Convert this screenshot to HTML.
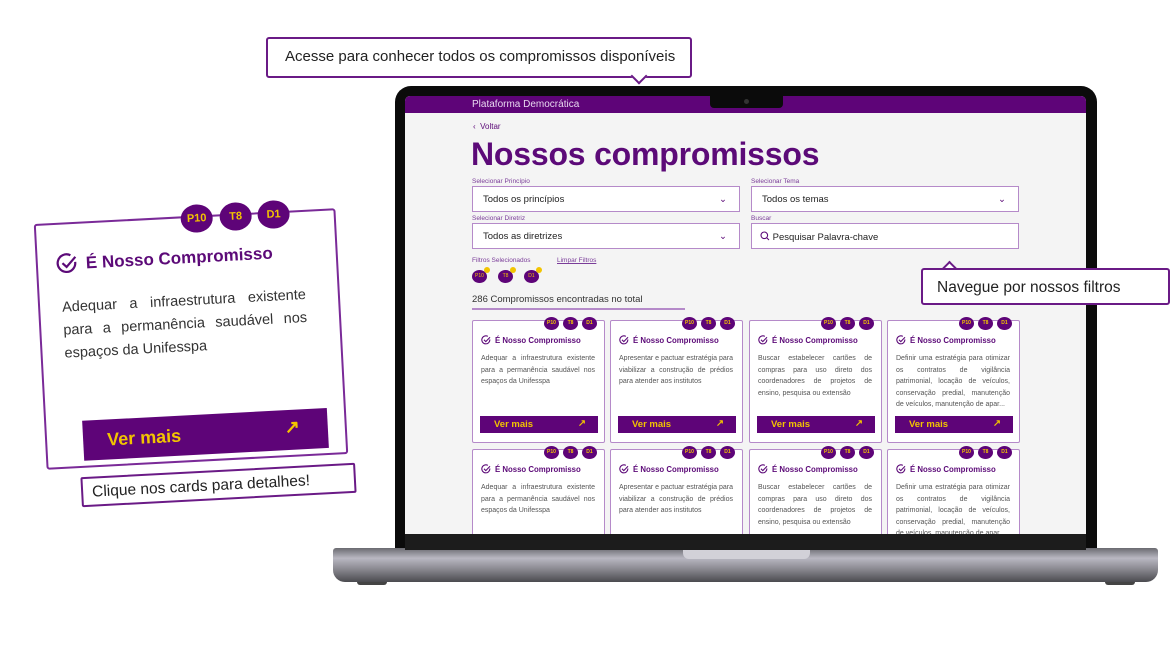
<!DOCTYPE html>
<html><head><meta charset="utf-8"><style>
*{box-sizing:border-box;margin:0;padding:0}
body{width:1171px;height:670px;background:#fff;position:relative;overflow:hidden;font-family:"Liberation Sans",sans-serif;color:#222}
.abs{position:absolute}
.p{color:#5c0a78}
.frame{left:395px;top:86px;width:702px;height:470px;background:#0b0b0b;border-radius:16px 16px 0 0}
.screen{left:405px;top:96px;width:681px;height:438px;background:#f4f4f4;overflow:hidden;border-radius:5px 5px 0 0}
.bar{left:0;top:0;width:681px;height:17px;background:#5e0478;color:#e8d8f0;font-size:10px;padding:3px 0 0 67px}
.notch{left:305px;top:0;width:73px;height:12px;background:#0b0b0b;border-radius:0 0 4px 4px}
.sel{background:#fff;border:1.5px solid #b58ac9;height:26px;font-size:9.5px;padding:7px 0 0 10px;color:#222}
.lbl{font-size:6.5px;color:#7a3c99}
.card{width:133px;height:123px;background:#fff;border:1.5px solid #b58ac9;border-radius:2px}
.ct{position:absolute;left:8px;top:14px;font-size:7.8px;font-weight:bold;color:#5c0a78;white-space:nowrap}
.ct svg{vertical-align:-2px;margin-right:4px}
.cx{position:absolute;left:8px;top:32px;width:114px;font-size:7px;line-height:11.5px;color:#555;text-align:justify}
.btn{position:absolute;left:7px;top:95px;width:118px;height:17px;background:#5e0478;color:#f2c400;font-size:9.5px;font-weight:bold;padding:3px 0 0 14px}
.btn span{position:absolute;right:12px;top:2px}
.bd{position:absolute;top:-4px;width:15px;height:13px;border-radius:50%;background:#5e0478;color:#f2c400;font-size:5px;font-weight:bold;text-align:center;line-height:13px}
.tip{background:#fff;border:2px solid #6a1a86;border-radius:3px;color:#222}
</style></head><body>

<div class="abs tip" style="left:266px;top:37px;width:426px;height:41px;padding:9px 0 0 17px;font-size:15px">Acesse para conhecer todos os compromissos disponíveis</div>
<div class="abs" style="left:633px;top:70px;width:12px;height:12px;background:#fff;border-right:2px solid #6a1a86;border-bottom:2px solid #6a1a86;transform:rotate(45deg)"></div>

<div class="abs frame"></div>
<div class="abs" style="left:333px;top:548px;width:825px;height:34px;border-radius:3px 3px 12px 12px;background:linear-gradient(180deg,#6a6a70 0%,#b9b8c2 30%,#8d8c94 60%,#4b4b50 100%)"></div>
<div class="abs" style="left:405px;top:534px;width:681px;height:16px;background:#1c1c1c"></div>
<div class="abs" style="left:683px;top:550px;width:127px;height:9px;background:#d2d1d8;border-radius:0 0 6px 6px"></div>
<div class="abs" style="left:357px;top:582px;width:30px;height:3px;background:#444;border-radius:0 0 3px 3px"></div>
<div class="abs" style="left:1105px;top:582px;width:30px;height:3px;background:#444;border-radius:0 0 3px 3px"></div>

<div class="abs screen">
 <div class="abs bar">Plataforma Democrática</div>
 <div class="abs notch"><div style="position:absolute;left:34px;top:3px;width:5px;height:5px;border-radius:50%;background:#333"></div></div>
 <div class="abs p" style="left:68px;top:26px;font-size:8px">‹&nbsp;&nbsp;Voltar</div>
 <div class="abs p" style="left:66px;top:40px;font-size:32px;font-weight:bold;letter-spacing:-0.2px">Nossos compromissos</div>
 <div class="abs lbl" style="left:67px;top:82px">Selecionar Princípio</div>
 <div class="abs sel" style="left:67px;top:90px;width:268px">Todos os princípios<span style="position:absolute;right:12px;color:#5c0a78">⌄</span></div>
 <div class="abs lbl" style="left:346px;top:82px">Selecionar Tema</div>
 <div class="abs sel" style="left:346px;top:90px;width:268px">Todos os temas<span style="position:absolute;right:12px;color:#5c0a78">⌄</span></div>
 <div class="abs lbl" style="left:67px;top:119px">Selecionar Diretriz</div>
 <div class="abs sel" style="left:67px;top:127px;width:268px">Todos as diretrizes<span style="position:absolute;right:12px;color:#5c0a78">⌄</span></div>
 <div class="abs lbl" style="left:346px;top:119px">Buscar</div>
 <div class="abs sel" style="left:346px;top:127px;width:268px;padding-left:8px"><svg width="10" height="10" viewBox="0 0 10 10" style="vertical-align:-1px"><circle cx="4.3" cy="4.3" r="3.3" fill="none" stroke="#5c0a78" stroke-width="1.1"/><path d="M6.6 6.6L9 9" stroke="#5c0a78" stroke-width="1.1"/></svg> Pesquisar Palavra-chave</div>
 <div class="abs lbl" style="left:67px;top:161px">Filtros Selecionados</div>
 <div class="abs lbl" style="left:152px;top:161px;text-decoration:underline">Limpar Filtros</div>
 <div class="abs" style="left:67px;top:174px;width:15px;height:13px;border-radius:50%;background:#5e0478;color:#f2c400;font-size:5px;text-align:center;line-height:13px">P10</div>
 <div class="abs" style="left:79px;top:171px;width:6px;height:6px;border-radius:50%;background:#f2c400"></div>
 <div class="abs" style="left:93px;top:174px;width:15px;height:13px;border-radius:50%;background:#5e0478;color:#f2c400;font-size:5px;text-align:center;line-height:13px">T8</div>
 <div class="abs" style="left:105px;top:171px;width:6px;height:6px;border-radius:50%;background:#f2c400"></div>
 <div class="abs" style="left:119px;top:174px;width:15px;height:13px;border-radius:50%;background:#5e0478;color:#f2c400;font-size:5px;text-align:center;line-height:13px">D1</div>
 <div class="abs" style="left:131px;top:171px;width:6px;height:6px;border-radius:50%;background:#f2c400"></div>
 <div class="abs" style="left:67px;top:198px;font-size:9.5px;color:#333">286 Compromissos encontradas no total</div>
 <div class="abs" style="left:67px;top:212px;width:213px;height:2px;background:#b58ac9"></div>

 <div class="abs card" style="left:67px;top:224px"><div class="bd" style="left:71px">P10</div><div class="bd" style="left:90px">T8</div><div class="bd" style="left:109px">D1</div><div class="ct"><svg width="10" height="10" viewBox="0 0 10 10"><path d="M8.8 4.5A4 4 0 1 1 6.8 1.4" fill="none" stroke="#5c0a78" stroke-width="1.1"/><path d="M3 4.8l1.8 1.8L9 2.2" fill="none" stroke="#5c0a78" stroke-width="1.1"/></svg>É Nosso Compromisso</div><div class="cx">Adequar a infraestrutura existente para a permanência saudável nos espaços da Unifesspa</div><div class="btn">Ver mais<span>↗</span></div></div>
 <div class="abs card" style="left:205px;top:224px"><div class="bd" style="left:71px">P10</div><div class="bd" style="left:90px">T8</div><div class="bd" style="left:109px">D1</div><div class="ct"><svg width="10" height="10" viewBox="0 0 10 10"><path d="M8.8 4.5A4 4 0 1 1 6.8 1.4" fill="none" stroke="#5c0a78" stroke-width="1.1"/><path d="M3 4.8l1.8 1.8L9 2.2" fill="none" stroke="#5c0a78" stroke-width="1.1"/></svg>É Nosso Compromisso</div><div class="cx">Apresentar e pactuar estratégia para viabilizar a construção de prédios para atender aos institutos</div><div class="btn">Ver mais<span>↗</span></div></div>
 <div class="abs card" style="left:344px;top:224px"><div class="bd" style="left:71px">P10</div><div class="bd" style="left:90px">T8</div><div class="bd" style="left:109px">D1</div><div class="ct"><svg width="10" height="10" viewBox="0 0 10 10"><path d="M8.8 4.5A4 4 0 1 1 6.8 1.4" fill="none" stroke="#5c0a78" stroke-width="1.1"/><path d="M3 4.8l1.8 1.8L9 2.2" fill="none" stroke="#5c0a78" stroke-width="1.1"/></svg>É Nosso Compromisso</div><div class="cx">Buscar estabelecer cartões de compras para uso direto dos coordenadores de projetos de ensino, pesquisa ou extensão</div><div class="btn">Ver mais<span>↗</span></div></div>
 <div class="abs card" style="left:482px;top:224px"><div class="bd" style="left:71px">P10</div><div class="bd" style="left:90px">T8</div><div class="bd" style="left:109px">D1</div><div class="ct"><svg width="10" height="10" viewBox="0 0 10 10"><path d="M8.8 4.5A4 4 0 1 1 6.8 1.4" fill="none" stroke="#5c0a78" stroke-width="1.1"/><path d="M3 4.8l1.8 1.8L9 2.2" fill="none" stroke="#5c0a78" stroke-width="1.1"/></svg>É Nosso Compromisso</div><div class="cx">Definir uma estratégia para otimizar os contratos de vigilância patrimonial, locação de veículos, conservação predial, manutenção de veículos, manutenção de apar...</div><div class="btn">Ver mais<span>↗</span></div></div>
 <div class="abs card" style="left:67px;top:353px"><div class="bd" style="left:71px">P10</div><div class="bd" style="left:90px">T8</div><div class="bd" style="left:109px">D1</div><div class="ct"><svg width="10" height="10" viewBox="0 0 10 10"><path d="M8.8 4.5A4 4 0 1 1 6.8 1.4" fill="none" stroke="#5c0a78" stroke-width="1.1"/><path d="M3 4.8l1.8 1.8L9 2.2" fill="none" stroke="#5c0a78" stroke-width="1.1"/></svg>É Nosso Compromisso</div><div class="cx">Adequar a infraestrutura existente para a permanência saudável nos espaços da Unifesspa</div></div>
 <div class="abs card" style="left:205px;top:353px"><div class="bd" style="left:71px">P10</div><div class="bd" style="left:90px">T8</div><div class="bd" style="left:109px">D1</div><div class="ct"><svg width="10" height="10" viewBox="0 0 10 10"><path d="M8.8 4.5A4 4 0 1 1 6.8 1.4" fill="none" stroke="#5c0a78" stroke-width="1.1"/><path d="M3 4.8l1.8 1.8L9 2.2" fill="none" stroke="#5c0a78" stroke-width="1.1"/></svg>É Nosso Compromisso</div><div class="cx">Apresentar e pactuar estratégia para viabilizar a construção de prédios para atender aos institutos</div></div>
 <div class="abs card" style="left:344px;top:353px"><div class="bd" style="left:71px">P10</div><div class="bd" style="left:90px">T8</div><div class="bd" style="left:109px">D1</div><div class="ct"><svg width="10" height="10" viewBox="0 0 10 10"><path d="M8.8 4.5A4 4 0 1 1 6.8 1.4" fill="none" stroke="#5c0a78" stroke-width="1.1"/><path d="M3 4.8l1.8 1.8L9 2.2" fill="none" stroke="#5c0a78" stroke-width="1.1"/></svg>É Nosso Compromisso</div><div class="cx">Buscar estabelecer cartões de compras para uso direto dos coordenadores de projetos de ensino, pesquisa ou extensão</div></div>
 <div class="abs card" style="left:482px;top:353px"><div class="bd" style="left:71px">P10</div><div class="bd" style="left:90px">T8</div><div class="bd" style="left:109px">D1</div><div class="ct"><svg width="10" height="10" viewBox="0 0 10 10"><path d="M8.8 4.5A4 4 0 1 1 6.8 1.4" fill="none" stroke="#5c0a78" stroke-width="1.1"/><path d="M3 4.8l1.8 1.8L9 2.2" fill="none" stroke="#5c0a78" stroke-width="1.1"/></svg>É Nosso Compromisso</div><div class="cx">Definir uma estratégia para otimizar os contratos de vigilância patrimonial, locação de veículos, conservação predial, manutenção de veículos, manutenção de apar...</div></div>
</div>

<div class="abs" style="left:944px;top:263px;width:11px;height:11px;background:#fff;border-left:2px solid #6a1a86;border-top:2px solid #6a1a86;transform:rotate(45deg)"></div>
<div class="abs tip" style="left:921px;top:268px;width:249px;height:37px;padding:9px 0 0 14px;font-size:15.5px">Navegue por nossos filtros</div>
<div class="abs" style="left:945px;top:270px;width:10px;height:3px;background:#fff"></div>

<div class="abs" style="left:40px;top:216px;width:302px;height:246px;transform:rotate(-3deg);transform-origin:center">
 <div style="position:absolute;left:0;top:0;width:302px;height:246px;background:#fff;border:2px solid #7a2a98;border-radius:3px"></div>
 <div style="position:absolute;left:147px;top:-11px;width:32px;height:28px;border-radius:50%;background:#5e0478;color:#f2c400;font-size:11px;font-weight:bold;text-align:center;line-height:28px">P10</div>
 <div style="position:absolute;left:186px;top:-11px;width:32px;height:28px;border-radius:50%;background:#5e0478;color:#f2c400;font-size:11px;font-weight:bold;text-align:center;line-height:28px">T8</div>
 <div style="position:absolute;left:224px;top:-11px;width:32px;height:28px;border-radius:50%;background:#5e0478;color:#f2c400;font-size:11px;font-weight:bold;text-align:center;line-height:28px">D1</div>
 <div style="position:absolute;left:20px;top:30px;font-size:17px;font-weight:bold;color:#5c0a78;white-space:nowrap"><svg width="22" height="22" viewBox="0 0 10 10" style="vertical-align:-5px;margin-right:8px"><path d="M8.8 4.5A4 4 0 1 1 6.8 1.4" fill="none" stroke="#5c0a78" stroke-width="1"/><path d="M3 4.8l1.8 1.8L9 2.2" fill="none" stroke="#5c0a78" stroke-width="1"/></svg>É Nosso Compromisso</div>
 <div style="position:absolute;left:24px;top:74px;width:244px;font-size:14.5px;line-height:23px;color:#333;text-align:justify">Adequar a infraestrutura existente para a permanência saudável nos espaços da Unifesspa</div>
 <div style="position:absolute;left:38px;top:199px;width:245px;height:40px;background:#5e0478;color:#f2c400;font-size:18px;font-weight:bold;padding:10px 0 0 24px">Ver mais<span style="position:absolute;right:28px;top:7px">↗</span></div>
</div>
<div class="abs tip" style="left:81px;top:470px;width:275px;height:30px;padding:5px 0 0 9px;font-size:15.5px;transform:rotate(-3deg);border-radius:2px">Clique nos cards para detalhes!</div>

</body></html>
